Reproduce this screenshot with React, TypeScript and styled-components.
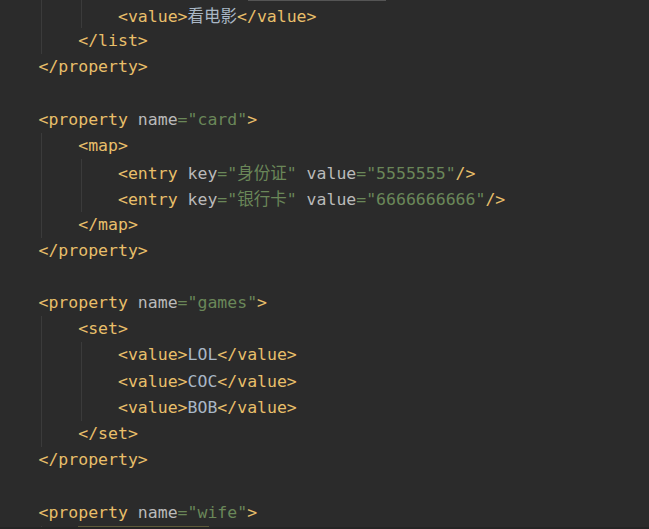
import React from "react";
import styled, { createGlobalStyle, css } from "styled-components";

const Global = createGlobalStyle`
  html, body { margin: 0; padding: 0; background: #2b2b2b; }
  body { width: 649px; height: 529px; overflow: hidden; }
`;

const Editor = styled.div`
  width: 649px;
  height: 529px;
  background: #2b2b2b;
  overflow: hidden;
  display: flex;
  flex-direction: column;
  font-family: "DejaVu Sans Mono", "Liberation Mono", monospace;
  font-size: 16.5px;
`;

const Line = styled.div<{ $h?: number }>`
  height: ${(p) => p.$h ?? 26.2}px;
  flex-shrink: 0;
  display: flex;
  align-items: stretch;
  padding-left: 38.5px;
  white-space: pre;
  line-height: ${(p) => p.$h ?? 26.2}px;
`;

const Indent = styled.span<{ $guide: boolean }>`
  width: 4ch;
  flex-shrink: 0;
  ${(p) =>
    p.$guide &&
    css`
      background: linear-gradient(#3b3b3b, #3b3b3b) 2.5px 0 / 1px 100% no-repeat;
    `}
`;

const Code = styled.span`
  display: inline-block;
`;

const Tag = styled.span`color: #e8bf6a;`;
const Attr = styled.span`color: #bababa;`;
const Str = styled.span`color: #6a8759;`;
const Text = styled.span`color: #a9b7c6;`;
const Cjk = styled.span`
  font-family: "Noto Sans CJK SC", sans-serif;
  font-size: 16.5px;
`;

const TopMark = styled.span`
  margin-left: 130px;
  width: 138px;
  height: 1px;
  background: #555555;
`;

const MatchMark = styled.span`
  width: 131px;
  height: 1px;
  background: #5e5a3a;
`;

const BottomStrip = styled.div`
  height: 2px;
  flex-shrink: 0;
  background: #252525;
`;

type L = { indent: number; guides: number; content?: React.ReactNode };

const lines: L[] = [
  {
    indent: 2,
    guides: 2,
    content: (
      <>
        <Tag>&lt;value&gt;</Tag>
        <Text><Cjk>看电影</Cjk></Text>
        <Tag>&lt;/value&gt;</Tag>
      </>
    ),
  },
  { indent: 1, guides: 1, content: <Tag>&lt;/list&gt;</Tag> },
  { indent: 0, guides: 0, content: <Tag>&lt;/property&gt;</Tag> },
  { indent: 0, guides: 0 },
  {
    indent: 0,
    guides: 0,
    content: (
      <>
        <Tag>&lt;property </Tag>
        <Attr>name</Attr>
        <Str>="card"</Str>
        <Tag>&gt;</Tag>
      </>
    ),
  },
  { indent: 1, guides: 1, content: <Tag>&lt;map&gt;</Tag> },
  {
    indent: 2,
    guides: 2,
    content: (
      <>
        <Tag>&lt;entry </Tag>
        <Attr>key</Attr>
        <Str>="<Cjk>身份证</Cjk>"</Str>
        <Tag> </Tag>
        <Attr>value</Attr>
        <Str>="5555555"</Str>
        <Tag>/&gt;</Tag>
      </>
    ),
  },
  {
    indent: 2,
    guides: 2,
    content: (
      <>
        <Tag>&lt;entry </Tag>
        <Attr>key</Attr>
        <Str>="<Cjk>银行卡</Cjk>"</Str>
        <Tag> </Tag>
        <Attr>value</Attr>
        <Str>="6666666666"</Str>
        <Tag>/&gt;</Tag>
      </>
    ),
  },
  { indent: 1, guides: 1, content: <Tag>&lt;/map&gt;</Tag> },
  { indent: 0, guides: 0, content: <Tag>&lt;/property&gt;</Tag> },
  { indent: 0, guides: 0 },
  {
    indent: 0,
    guides: 0,
    content: (
      <>
        <Tag>&lt;property </Tag>
        <Attr>name</Attr>
        <Str>="games"</Str>
        <Tag>&gt;</Tag>
      </>
    ),
  },
  { indent: 1, guides: 1, content: <Tag>&lt;set&gt;</Tag> },
  ...["LOL", "COC", "BOB"].map((v) => ({
    indent: 2,
    guides: 2,
    content: (
      <>
        <Tag>&lt;value&gt;</Tag>
        <Text>{v}</Text>
        <Tag>&lt;/value&gt;</Tag>
      </>
    ),
  })),
  { indent: 1, guides: 1, content: <Tag>&lt;/set&gt;</Tag> },
  { indent: 0, guides: 0, content: <Tag>&lt;/property&gt;</Tag> },
  { indent: 0, guides: 0 },
  {
    indent: 0,
    guides: 0,
    content: (
      <>
        <Tag>&lt;property </Tag>
        <Attr>name</Attr>
        <Str>="wife"</Str>
        <Tag>&gt;</Tag>
      </>
    ),
  },
];

function Indents({ indent, guides }: { indent: number; guides: number }) {
  return (
    <>
      {Array.from({ length: indent }, (_, i) => (
        <Indent key={i} $guide={i < guides} />
      ))}
    </>
  );
}

export default function App() {
  return (
    <>
      <Global />
      <Editor>
        <Line $h={2}>
          <Indents indent={2} guides={2} />
          <TopMark />
        </Line>
        {lines.map((l, i) => (
          <Line key={i}>
            <Indents indent={l.indent} guides={l.guides} />
            {l.content && <Code>{l.content}</Code>}
          </Line>
        ))}
        <Line $h={1}>
          <Indents indent={1} guides={1} />
          <MatchMark />
        </Line>
        <BottomStrip />
      </Editor>
    </>
  );
}
